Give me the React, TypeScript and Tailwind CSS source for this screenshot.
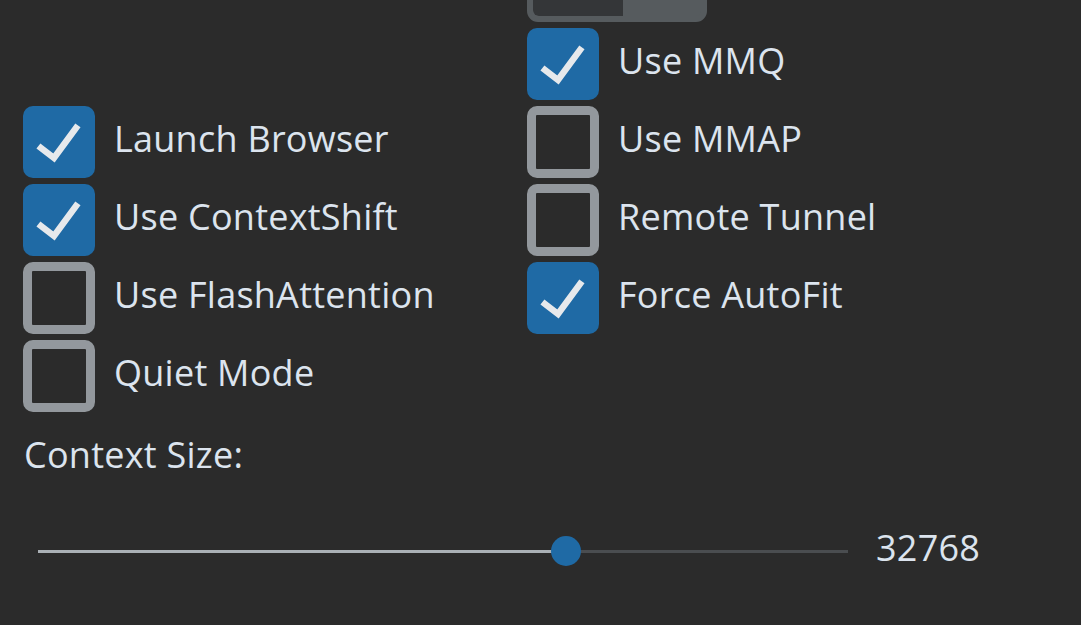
import React from "react";

function Box({ checked }: { checked: boolean }) {
  if (checked) {
    return (
      <div className="w-[72px] h-[72px] rounded-[10px] bg-[#1f6aa5] shrink-0 flex items-center justify-center">
        <svg width="72" height="72" viewBox="0 0 72 72">
          <polyline points="18,42 31,52 53,22" fill="none" stroke="#e6e9ec" strokeWidth="6.5" strokeLinecap="square" strokeLinejoin="miter" />
        </svg>
      </div>
    );
  }
  return <div className="w-[72px] h-[72px] rounded-[10px] border-[9px] border-[#93989d] shrink-0" />;
}

function Check({ label, checked }: { label: string; checked: boolean }) {
  return (
    <div className="flex items-center h-[72px]">
      <Box checked={checked} />
      <span className="ml-[19px] pb-[6px] text-[36px] leading-[42px] tracking-[0.25px] text-[#dce4ee] whitespace-nowrap">{label}</span>
    </div>
  );
}

export default function App() {
  return (
    <div
      className="w-[1081px] h-[625px] overflow-hidden bg-[#2b2b2b] text-[#dce4ee]"
      style={{ fontFamily: "'Open Sans', 'Liberation Sans', sans-serif" }}
    >
      <div className="pl-[23px] -mt-[34px] grid grid-cols-[504px_1fr] gap-y-[6px]">
        <div />
        <div className="w-[180px] h-[56px] rounded-[11px] border-[6px] border-[#565b5e] bg-[#565b5e] flex overflow-hidden">
          <div className="w-[90px] h-full bg-[#343638] rounded-l-[6px]" />
          <div className="flex-1" />
        </div>

        <div className="h-[72px]" />
        <Check label="Use MMQ" checked />

        <Check label="Launch Browser" checked />
        <Check label="Use MMAP" checked={false} />

        <Check label="Use ContextShift" checked />
        <Check label="Remote Tunnel" checked={false} />

        <Check label="Use FlashAttention" checked={false} />
        <Check label="Force AutoFit" checked />

        <Check label="Quiet Mode" checked={false} />
        <div />
      </div>

      <div className="pl-[24px] mt-[22px] text-[36px] leading-[42px] tracking-[0.25px]">Context Size:</div>

      <div className="mt-[60px] flex items-center h-[30px] pl-[38px]">
        <div className="relative w-[810px] h-[30px] flex items-center">
          <div className="w-[528px] h-[3px] bg-[#aab0b5]" />
          <div className="flex-1 h-[3px] bg-[#4a4d50]" />
          <div className="absolute left-[513px] top-0 w-[30px] h-[30px] rounded-full bg-[#1f6aa5]" />
        </div>
        <span className="ml-[28px] pb-[6px] text-[36px] leading-[42px] tracking-[0.25px]">32768</span>
      </div>
    </div>
  );
}
